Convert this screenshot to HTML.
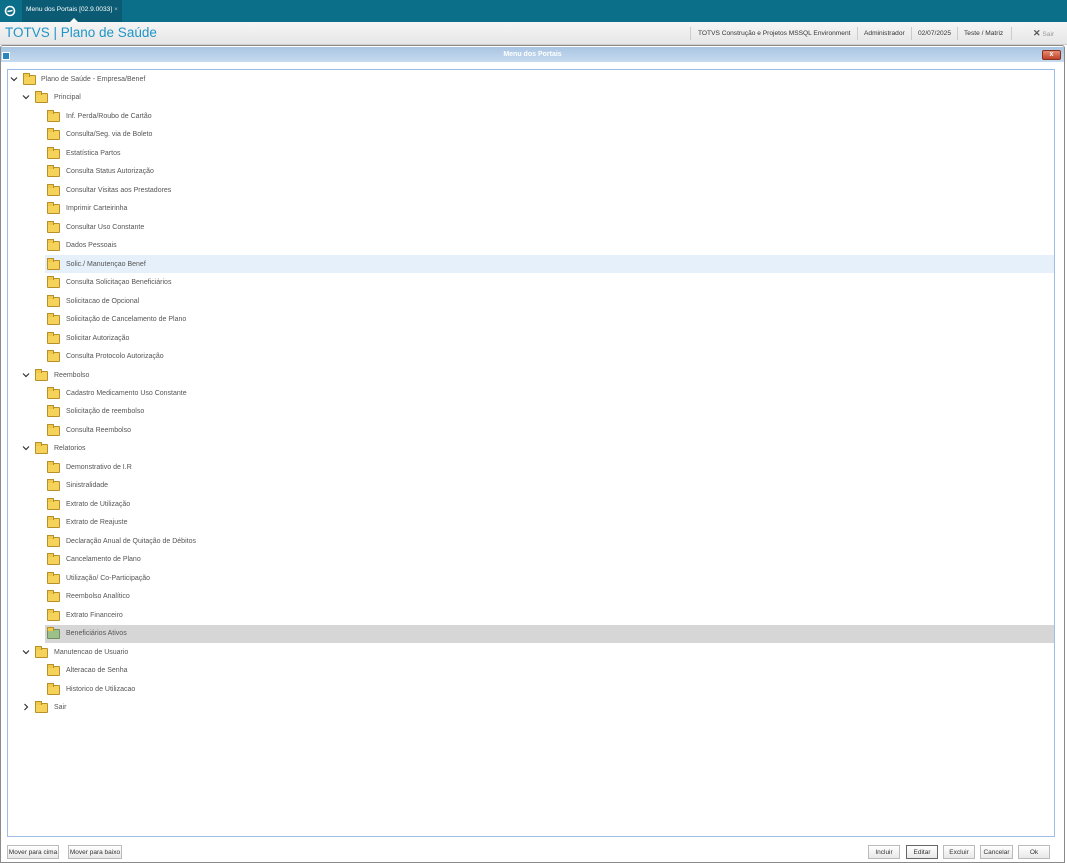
<!DOCTYPE html>
<html><head><meta charset="utf-8"><style>
*{margin:0;padding:0;box-sizing:border-box}
body{width:1067px;height:863px;background:#fff;font-family:"Liberation Sans",sans-serif;position:relative;overflow:hidden}
.top{position:absolute;left:0;top:0;width:1067px;height:22px;background:#0b6f89}
.tab{position:absolute;left:22px;top:0;width:100px;height:22px;background:#0a5b73;color:#fff;font-size:6.6px;line-height:19px;padding-left:4px;white-space:nowrap;overflow:hidden}
.hdr{position:absolute;left:0;top:22px;width:1067px;height:23px;background:linear-gradient(#f6f6f6,#e6e6e6);border-bottom:1px solid #d0d0d0}
.title{position:absolute;left:5px;top:3px;font-size:13.5px;color:#1f95c8}
.hi{position:absolute;top:7px;font-size:6.6px;color:#333;line-height:9px;white-space:nowrap}
.sep{position:absolute;top:5px;width:1px;height:13px;background:#ccc}
.win{position:absolute;left:0;top:45px;width:1065px;height:818px;border:1px solid #8a8a8a;border-radius:3px 3px 0 0;background:#fff}
.wt{position:absolute;left:1px;top:47px;width:1063px;height:15px;background:linear-gradient(#a9c5e2,#c6daee);color:#fff;font-size:7px;text-align:center;line-height:15px;font-weight:bold}
.panel{position:absolute;left:7px;top:69px;width:1048px;height:768px;border:1px solid #9dbde6}
.row{position:absolute;height:18px;font-size:7px;color:#555;line-height:18px;white-space:nowrap}
.fd{position:absolute;width:13px;height:10px;top:4px;background:#f5d35a;border:1px solid #b8902a;border-radius:1px}
.fd:before{content:"";position:absolute;left:-1px;top:-3px;width:5px;height:3px;background:#f0c84a;border:1px solid #b8902a;border-bottom:none}
.ch{position:absolute;top:0;font-size:8px;color:#333}
.btn{position:absolute;top:845px;height:14px;border:1px solid #bbb;background:linear-gradient(#fff,#e8e8e8);font-size:6.5px;color:#333;text-align:center;line-height:13px;white-space:nowrap}
</style></head><body>
<div class="top">
<svg style="position:absolute;left:4px;top:5px" width="12" height="12" viewBox="0 0 12 12"><circle cx="6" cy="6" r="4.5" fill="none" stroke="#fff" stroke-width="1.6"/><path d="M3.5 6.5L8.5 5.5" stroke="#fff" stroke-width="1.6"/></svg>
<div class="tab">Menu dos Portais [02.9.0033] <span style="color:#bbb">×</span></div>
<div style="position:absolute;left:70px;top:18px;width:0;height:0;border-left:4px solid transparent;border-right:4px solid transparent;border-bottom:4px solid #fff"></div>
</div>
<div class="hdr"><div class="title">TOTVS | Plano de Saúde</div>
<div class="sep" style="left:690px"></div>
<div class="hi" style="left:698px">TOTVS Construção e Projetos MSSQL Environment</div>
<div class="sep" style="left:857px"></div>
<div class="hi" style="left:864px">Administrador</div>
<div class="sep" style="left:911px"></div>
<div class="hi" style="left:918px">02/07/2025</div>
<div class="sep" style="left:957px"></div>
<div class="hi" style="left:964px">Teste / Matriz</div>
<div class="sep" style="left:1011px"></div>
<div class="hi" style="left:1033px;color:#999"><b style="color:#555;font-size:9px">✕</b> Sair</div>
</div>
<div class="win"></div>
<div class="wt">Menu dos Portais</div>
<div style="position:absolute;left:2px;top:52px;width:8px;height:8px;background:#2a86c0;border:1px solid #fff"></div>
<div style="position:absolute;left:1042px;top:50px;width:19px;height:10px;background:linear-gradient(#e88a70,#c0442a);border:1px solid #8a3020;border-radius:2px;color:#fff;font-size:7px;text-align:center;line-height:8px;font-weight:bold">x</div>
<div class="panel"></div>
<div style="position:absolute;left:45px;top:255px;width:1009px;height:18px;background:#e6f0fa"></div>
<div style="position:absolute;left:45px;top:625px;width:1009px;height:18px;background:#d6d6d6"></div>
<div id="tree"></div>
<script>
const items=[[0,"Plano de Saúde - Empresa/Benef","v"],[1,"Principal","v"],[2,"Inf. Perda/Roubo de Cartão"],[2,"Consulta/Seg. via de Boleto"],[2,"Estatística Partos"],[2,"Consulta Status Autorização"],[2,"Consultar Visitas aos Prestadores"],[2,"Imprimir Carteirinha"],[2,"Consultar Uso Constante"],[2,"Dados Pessoais"],[2,"Solic./ Manutençao Benef"],[2,"Consulta Solicitaçao Beneficiários"],[2,"Solicitacao de Opcional"],[2,"Solicitação de Cancelamento de Plano"],[2,"Solicitar Autorização"],[2,"Consulta Protocolo Autorização"],[1,"Reembolso","v"],[2,"Cadastro Medicamento Uso Constante"],[2,"Solicitação de reembolso"],[2,"Consulta Reembolso"],[1,"Relatorios","v"],[2,"Demonstrativo de I.R"],[2,"Sinistralidade"],[2,"Extrato de Utilização"],[2,"Extrato de Reajuste"],[2,"Declaração Anual de Quitação de Débitos"],[2,"Cancelamento de Plano"],[2,"Utilização/ Co-Participação"],[2,"Reembolso Analítico"],[2,"Extrato Financeiro"],[2,"Beneficiários Ativos","g"],[1,"Manutencao de Usuario","v"],[2,"Alteracao de Senha"],[2,"Historico de Utilizacao"],[1,"Sair",">"]];
let h="";items.forEach((it,i)=>{const y=71+i*18.47;const l=it[0];const fx=[23,35,47][l],tx=[41,54,66][l];
if(it[2]=="v"||it[2]==">")h+=`<div class="ch" style="left:${fx-13}px;top:${y+4}px;width:8px;height:8px"><svg width="8" height="8" viewBox="0 0 8 8"><path d="${it[2]=="v"?"M1 2.5L4 5.5L7 2.5":"M2.5 1L5.5 4L2.5 7"}" fill="none" stroke="#333" stroke-width="1.2"/></svg></div>`;
const g=it[2]=="g"?"background:#9cc08a;border-color:#6f8f5e":"";
h+=`<div class="fd" style="left:${fx}px;top:${y+4}px;${g}"></div><div class="row" style="left:${tx}px;top:${y}px">${it[1]}</div>`;});
document.getElementById("tree").innerHTML=h;
</script>
<div class="btn" style="left:7px;width:52px">Mover para cima</div>
<div class="btn" style="left:68px;width:54px">Mover para baixo</div>
<div class="btn" style="left:868px;width:32px">Incluir</div>
<div class="btn" style="left:906px;width:32px;border-color:#666">Editar</div>
<div class="btn" style="left:943px;width:32px">Excluir</div>
<div class="btn" style="left:980px;width:33px">Cancelar</div>
<div class="btn" style="left:1018px;width:32px">Ok</div>
</body></html>
